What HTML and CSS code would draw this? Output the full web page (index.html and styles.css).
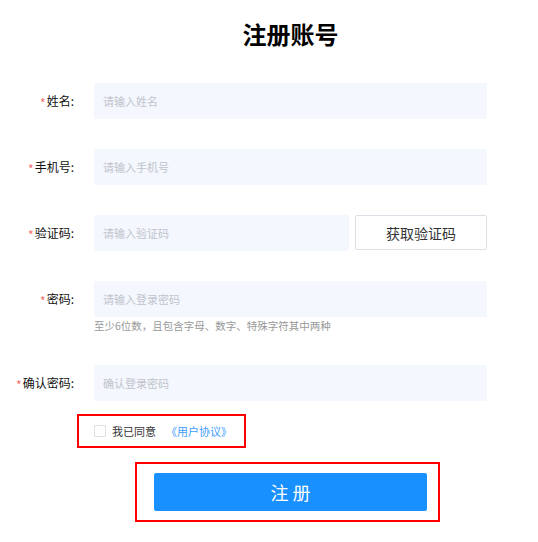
FILE: index.html
```html
<!DOCTYPE html>
<html lang="zh-CN">
<head>
    <meta charset="UTF-8">
    <title>注册账号</title>
    <link rel="stylesheet" href="styles.css">
</head>
<body>
    <div class="register">
        <h1 class="title">注册账号</h1>

        <div class="form-item">
            <label class="label"><span class="star">*</span>姓名:</label>
            <div class="control">
                <input class="input" type="text" placeholder="请输入姓名"/>
            </div>
        </div>

        <div class="form-item">
            <label class="label"><span class="star">*</span>手机号:</label>
            <div class="control">
                <input class="input" type="text" placeholder="请输入手机号"/>
            </div>
        </div>

        <div class="form-item">
            <label class="label"><span class="star">*</span>验证码:</label>
            <div class="control code-row">
                <input class="input input-code" type="text" placeholder="请输入验证码"/>
                <button class="btn-code" type="button">获取验证码</button>
            </div>
        </div>

        <div class="form-item">
            <label class="label"><span class="star">*</span>密码:</label>
            <div class="control">
                <input class="input" type="password" placeholder="请输入登录密码"/>
                <div class="hint">至少6位数，且包含字母、数字、特殊字符其中两种</div>
            </div>
        </div>

        <div class="form-item last">
            <label class="label"><span class="star">*</span>确认密码:</label>
            <div class="control">
                <input class="input" type="password" placeholder="确认登录密码"/>
            </div>
        </div>

        <div class="agree">
            <span class="checkbox"></span>
            <span class="agree-text">我已同意</span>
            <a class="agree-link" href="#">《用户协议》</a>
        </div>

        <div class="submit-wrap">
            <button class="btn-submit" type="button">注 册</button>
        </div>
    </div>
</body>
</html>
```

FILE: styles.css
```css
:root {
    --input-bg: #f4f7fe;
    --blue: #1890ff;
    --mark: #fe0000;
}
body {
    margin: 0;
    background: #fff;
    color: #303133;
    font-family: "Noto Sans CJK SC", "Noto Sans", sans-serif;
}
.register {
    width: 487px;
    padding-top: 18px;
}
.title {
    margin: 0 0 33px 94px;
    width: 393px;
    text-align: center;
    font-size: 24px;
    line-height: 32px;
    font-weight: bold;
    color: #000;
}
.form-item {
    display: flex;
    margin-bottom: 30px;
}
.form-item.last {
    margin-bottom: 13px;
}
.label {
    width: 94px;
    height: 36px;
    padding-right: 20px;
    box-sizing: border-box;
    text-align: right;
    font-size: 12px;
    line-height: 36px;
    color: #111;
    white-space: nowrap;
}
.star {
    color: #f56c6c;
    margin-right: 1px;
    line-height: 0;
    vertical-align: -2px;
}
.control {
    width: 393px;
}
.input {
    display: block;
    width: 100%;
    height: 36px;
    box-sizing: border-box;
    padding: 0 9px;
    border: none;
    border-radius: 2px;
    background: var(--input-bg);
    font-family: inherit;
    font-size: 11px;
    color: #333;
    outline: none;
}
.input::placeholder {
    color: #c0c4cc;
}
.code-row {
    display: flex;
    align-items: flex-start;
}
.input-code {
    width: 255px;
}
.btn-code {
    margin-left: 6px;
    width: 132px;
    height: 35px;
    border: 1px solid #dcdfe6;
    border-radius: 2px;
    background: #fff;
    font-family: inherit;
    font-size: 14px;
    color: #333;
    padding: 0;
}
.hint {
    font-size: 10.5px;
    line-height: 18px;
    color: #999;
    white-space: nowrap;
}
.agree {
    display: flex;
    align-items: center;
    margin-left: 77px;
    width: 169px;
    height: 34px;
    box-sizing: border-box;
    padding-left: 15px;
    border: 2px solid var(--mark);
    font-size: 11px;
    white-space: nowrap;
}
.checkbox {
    width: 12px;
    height: 12px;
    box-sizing: border-box;
    border: 1px solid #dcdfe6;
    border-radius: 1px;
    background: #fff;
    flex-shrink: 0;
}
.agree-text {
    margin-left: 6px;
    color: #333;
}
.agree-link {
    margin-left: 10px;
    color: #409eff;
    text-decoration: none;
}
.submit-wrap {
    margin: 14px 0 0 135px;
    width: 305px;
    height: 60px;
    box-sizing: border-box;
    padding: 9px 11px 9px 17px;
    border: 2px solid var(--mark);
}
.btn-submit {
    display: block;
    width: 273px;
    height: 38px;
    border: none;
    border-radius: 2px;
    background: var(--blue);
    color: #fff;
    font-family: inherit;
    font-size: 18px;
    padding: 0;
}
```
